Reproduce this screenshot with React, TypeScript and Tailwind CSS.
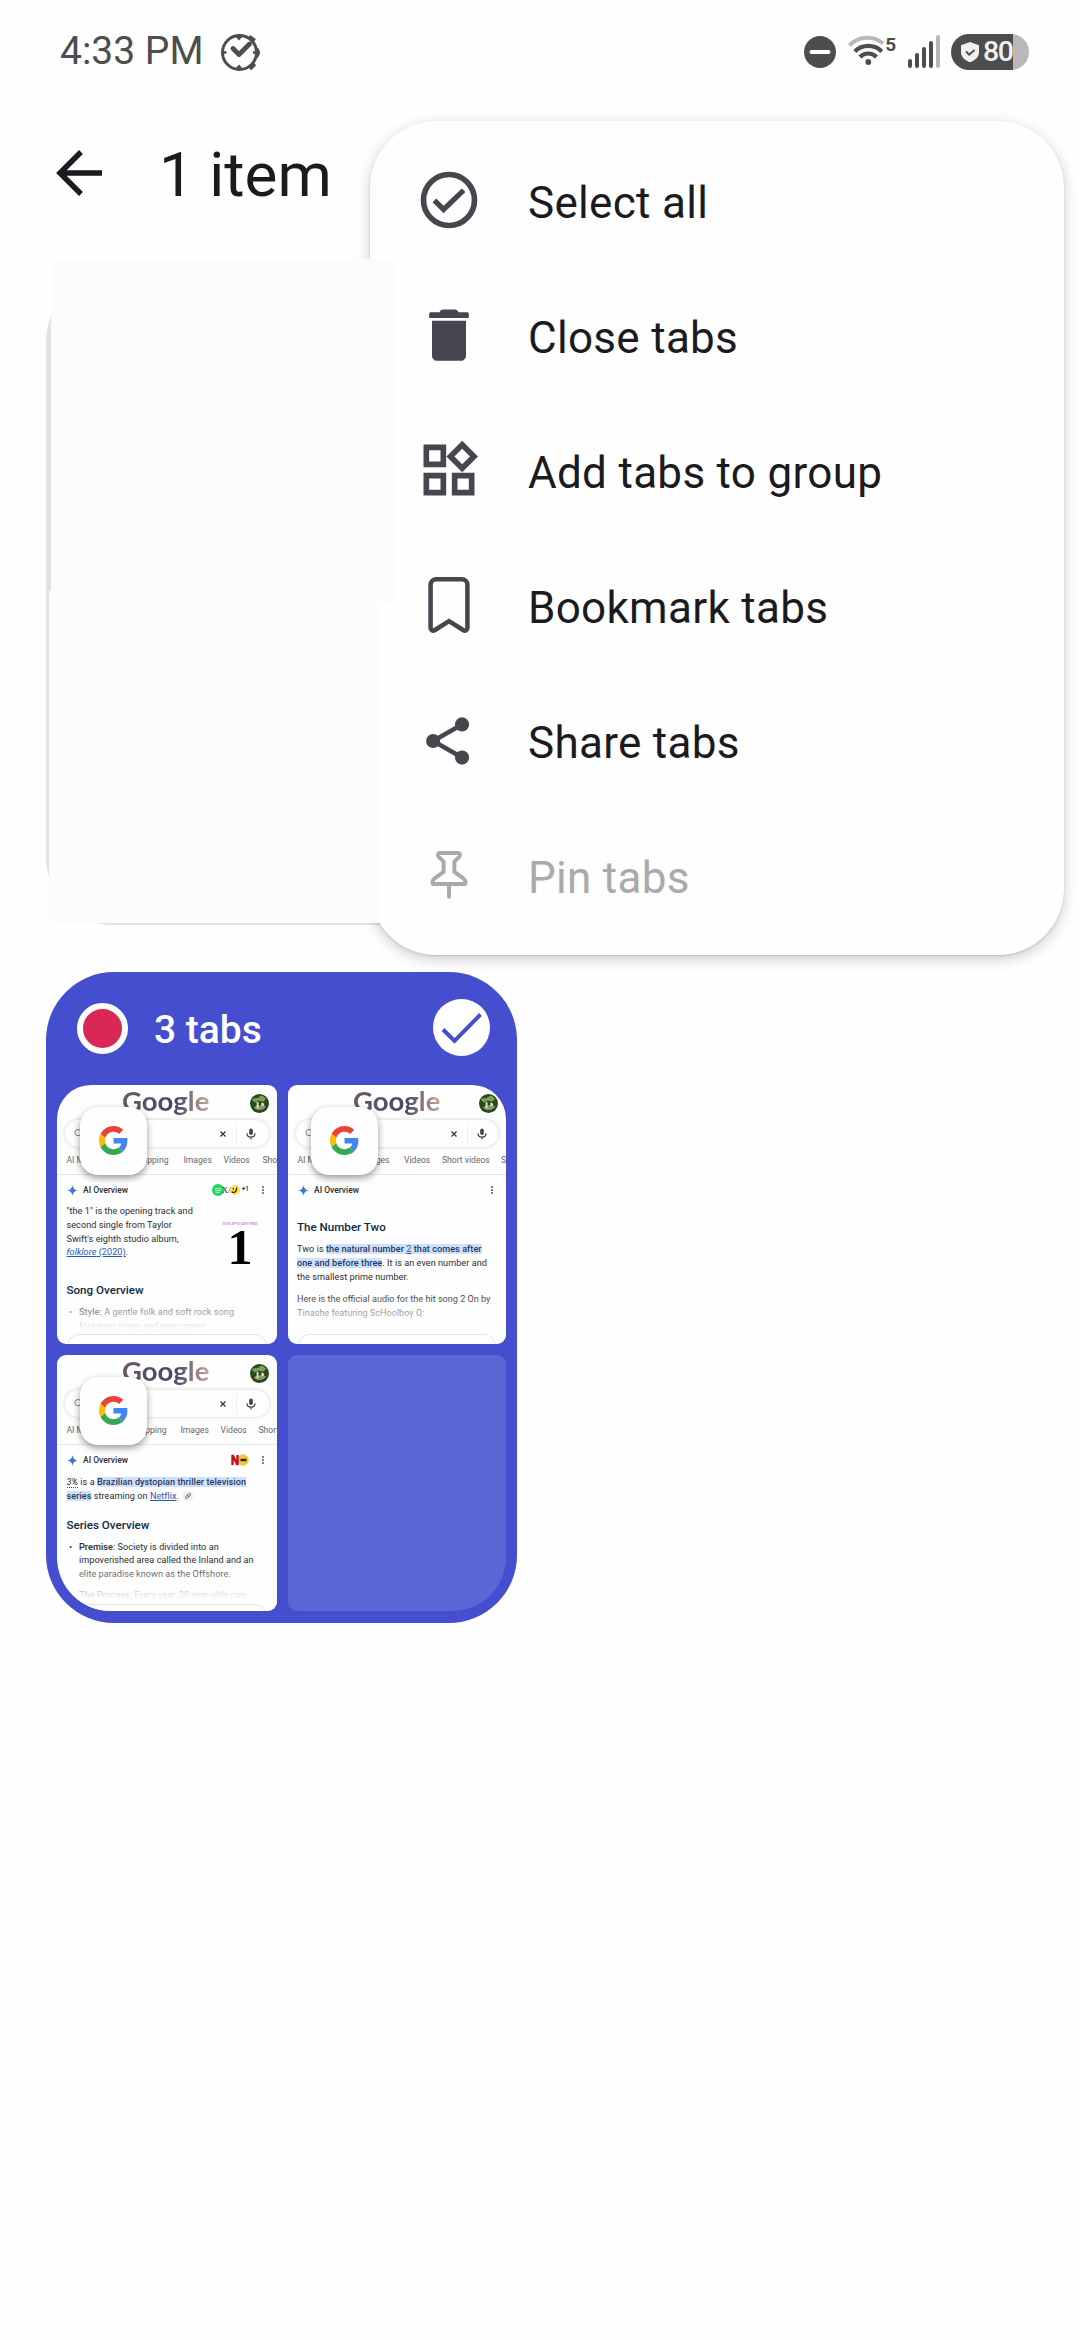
import React from "react";
import clsx from "clsx";

const ink = "#46464f";

function MenuIcon({ children, color = ink }: { children: React.ReactNode; color?: string }) {
  return (
    <svg viewBox="0 0 24 24" className="w-[68px] h-[68px] shrink-0 -mt-px" fill={color} stroke="none">
      {children}
    </svg>
  );
}

const menuItems = [
  {
    label: "Select all",
    icon: (
      <MenuIcon>
        <circle cx="12" cy="12" r="9" fill="none" stroke={ink} strokeWidth="2" />
        <path d="M10.1 16.7 17.8 9.2 16.5 7.9 10.1 14 7.5 11.5 6.2 12.800Z" />
      </MenuIcon>
    ),
  },
  {
    label: "Close tabs",
    icon: (
      <MenuIcon>
        <path d="M6 7h12v12.3c0 1-.8 1.8-1.8 1.8H7.8c-1 0-1.8-.8-1.8-1.8zM5 6V4.600c0-.4.3-.6.6-.6h3c.3-.6.7-1 1.300-1h4.200c.6 0 1 .4 1.300 1h3c.3 0 .6.2.6.6V6z" />
      </MenuIcon>
    ),
  },
  {
    label: "Add tabs to group",
    icon: (
      <MenuIcon>
        <path
          fillRule="evenodd"
          d="M3 3h8v8H3zM5 5v4h4V5zM3 13h8v8H3zM5 15v4h4v-4zM13 13h8v8h-8zM15 15v4h4v-4zM16.660 1.690 11.100 7.250l5.560 5.560 5.560-5.560zM16.660 4.500 19.400 7.250 16.660 10 13.920 7.250z"
        />
      </MenuIcon>
    ),
  },
  {
    label: "Bookmark tabs",
    icon: (
      <MenuIcon>
        <path
          fill="none"
          stroke={ink}
          strokeWidth="1.6"
          d="M5.500 4.900a2 2 0 0 1 2-2h9a2 2 0 0 1 2 2v15.200a.9.9 0 0 1-1.400.8L12 17.700l-5.100 3.200a.9.9 0 0 1-1.400-.8z"
        />
      </MenuIcon>
    ),
  },
  {
    label: "Share tabs",
    icon: (
      <MenuIcon>
        <path fill="none" stroke={ink} strokeWidth="1.6" d="M16.600 6.500 6.400 12.350l10.200 5.850" />
        <circle cx="16.600" cy="6.500" r="2.500" />
        <circle cx="6.400" cy="12.350" r="2.500" />
        <circle cx="16.600" cy="18.200" r="2.500" />
      </MenuIcon>
    ),
  },
  {
    label: "Pin tabs",
    disabled: true,
    icon: (
      <MenuIcon color="#aaaaaa">
        <path
          fill="none"
          stroke="#aaaaaa"
          strokeWidth="1.400"
          strokeLinecap="round"
          strokeLinejoin="round"
          d="M8.900 4.200h6.200c.8 0 1 .9.500 1.400L13.900 7.300v3.600l3.200 2.300c.6.500.8 1 .7 1.500 0 .3-.2.500-.5.500H6.700c-.3 0-.5-.2-.5-.5-.1-.5.1-1 .7-1.500l3.200-2.300V7.300L8.400 5.600c-.5-.5-.3-1.400.5-1.400zM12 15.300v4.400"
        />
      </MenuIcon>
    ),
  },
];

function StatusBar() {
  return (
    <div className="h-[103px] flex items-center justify-between pl-[60px] pr-[51px] text-[#4d4d4d]">
      <div className="flex items-center gap-[16px]">
        <span className="text-[39px] leading-none mt-[-1px]">4:33 PM</span>
        <svg viewBox="0 0 40 40" className="w-10 h-10" fill="none" stroke="currentColor">
          <circle cx="19.500" cy="20.500" r="17" strokeWidth="3" />
          <path d="M29 4.500l6 4M36.500 16.500l2 4-2 4.500M35 32l-5 5" strokeWidth="3.500" strokeLinejoin="round" />
          <path d="M13 16.500 19 22.500 29.500 12" strokeWidth="4.800" strokeLinecap="round" strokeLinejoin="round" />
          <path d="M14.500 3.500h9l-4.500 5zM14.500 37.500h9l-4.500-5z" fill="currentColor" stroke="none" />
          <path d="M3 20.500h3.500M33 20.500h4" strokeWidth="2.500" />
        </svg>
      </div>
      <div className="flex items-center">
        <svg viewBox="0 0 32 32" className="w-8 h-8 mr-3" fill="currentColor">
          <circle cx="16" cy="16" r="16" />
          <rect x="5.500" y="14" width="21" height="4" rx="2" fill="#fefefe" />
        </svg>
        <svg viewBox="0 0 48 36" className="w-12 h-9 mr-3" fill="none" strokeLinecap="butt">
          <path d="M1.500 11.500a24.500 24.500 0 0 1 33.500-2" stroke="#b8b8b8" strokeWidth="4" />
          <path d="M6.800 17.500a19 19 0 0 1 27 0M12 23a11.500 11.500 0 0 1 16.500 0" stroke="#4d4d4d" strokeWidth="4.200" />
          <circle cx="20.300" cy="28" r="2.900" fill="#4d4d4d" />
          <text x="37.200" y="16.500" fill="#4d4d4d" fontSize="19" fontWeight="700" fontFamily="Roboto, sans-serif">
            5
          </text>
        </svg>
        <div className="flex items-end gap-[3px] h-[33px] mr-[11px]">
          <div className="w-1 h-[9px] rounded-full bg-[#4d4d4d]" />
          <div className="w-1 h-[15px] rounded-full bg-[#4d4d4d]" />
          <div className="w-1 h-[21px] rounded-full bg-[#4d4d4d]" />
          <div className="w-1 h-[27px] rounded-full bg-[#4d4d4d]" />
          <div className="w-1 h-[33px] rounded-full bg-[#b8b8b8]" />
        </div>
        <div className="w-[78px] h-9 rounded-full overflow-hidden flex items-center pl-[10px] gap-[4px] bg-linear-to-r from-[#4d4d4d] from-80% to-[#b8b8b8] to-80%">
          <svg viewBox="0 0 18 20" className="w-[18px] h-5 shrink-0">
            <path d="M9 0 18 3.300v7C18 15 14 18.500 9 20.500 4 18.500 0 15 0 10.300v-7z" fill="#f0f0f0" />
            <path d="M5 9.500l3.200 3.200L13.500 8" fill="none" stroke="#4d4d4d" strokeWidth="1.800" />
          </svg>
          <span className="text-[28.500px] leading-none font-medium tracking-[-1.500px] text-[#f0f0f0] mt-px">80</span>
        </div>
      </div>
    </div>
  );
}

function GoogleG() {
  return (
    <svg viewBox="0 0 48 48" className="w-[29px] h-[29px] -mt-px -ml-px">
      <path fill="#EA4335" d="M24 9.500c3.540 0 6.710 1.220 9.210 3.600l6.850-6.850C35.900 2.380 30.470 0 24 0 14.620 0 6.510 5.380 2.560 13.220l7.980 6.190C12.430 13.720 17.740 9.500 24 9.500z" />
      <path fill="#4285F4" d="M46.980 24.550c0-1.570-.15-3.090-.38-4.550H24v9.020h12.940c-.58 2.960-2.260 5.480-4.780 7.180l7.730 6c4.510-4.180 7.090-10.360 7.090-17.650z" />
      <path fill="#FBBC05" d="M10.530 28.590c-.48-1.450-.76-2.990-.76-4.590s.27-3.140.76-4.590l-7.980-6.190C.92 16.460 0 20.120 0 24c0 3.880.92 7.540 2.560 10.780l7.970-6.190z" />
      <path fill="#34A853" d="M24 48c6.480 0 11.930-2.130 15.890-5.810l-7.730-6c-2.150 1.450-4.920 2.300-8.160 2.300-6.260 0-11.570-4.220-13.470-9.910l-7.980 6.190C6.510 42.620 14.620 48 24 48z" />
    </svg>
  );
}

function Dots() {
  return (
    <svg viewBox="0 0 2 8" className="w-[2px] h-2" fill="#444">
      <circle cx="1" cy="1" r=".9" />
      <circle cx="1" cy="4" r=".9" />
      <circle cx="1" cy="7" r=".9" />
    </svg>
  );
}

interface ThumbProps {
  className?: string;
  nav: React.ReactNode;
  sources?: React.ReactNode;
  children: React.ReactNode;
}

function Thumb({ className, nav, sources, children }: ThumbProps) {
  return (
    <div className={clsx("relative overflow-hidden bg-[#fefefe] whitespace-nowrap text-[#2b2d31]", className)}>
      <div className="h-[35px] pl-[65px] pr-[8px] flex justify-between">
        <span className="font-[Lato] text-[27.500px] leading-[32px] font-bold bg-linear-to-r from-[#6b5a63] via-[#474763] via-60% to-[#c9a596] bg-clip-text text-transparent">
          Google
        </span>
        <svg viewBox="0 0 20 20" className="w-[19px] h-[19px] mt-[9px]">
          <circle cx="10" cy="10" r="10" fill="#2c4a1f" />
          <path d="M2 6c3-3 5 0 8-3s5 1 7 2l-3 3-5-1-4 2z" fill="#7da05a" />
          <path d="M4 14c3-2 8-3 13-1-2 4-9 6-13 1z" fill="#8a9a6c" />
          <path d="M7 8l2 1v6H7zM12 9c2 0 3 1 3 3l-3 1z" fill="#dfe3cf" />
        </svg>
      </div>
      <div className="mx-[8px] h-[27px] rounded-full flex items-center shadow-[0_0_4px_rgba(0,0,0,0.18)]">
        <svg viewBox="0 0 10 10" className="w-[9px] h-[9px] ml-[9px]" fill="none" stroke="#777" strokeWidth="1">
          <circle cx="4.500" cy="4" r="3.500" />
        </svg>
        <svg viewBox="0 0 6 6" className="w-[6px] h-[6px] ml-[137px]" stroke="#333" strokeWidth="1.200">
          <path d="M.5.5l5 5M5.500.5l-5 5" />
        </svg>
        <div className="w-px h-[22px] bg-[#f0f0f0] ml-[10px]" />
        <svg viewBox="0 0 10 12" className="w-[10px] h-[12px] ml-[9px]" fill="none" stroke="#444" strokeWidth="1.200">
          <rect x="3.200" y=".5" width="3.600" height="6.500" rx="1.800" fill="#444" stroke="none" />
          <path d="M1 5.200c0 5.200 8 5.200 8 0M5 9v2.500" />
        </svg>
      </div>
      <div className="h-[28px] flex items-center pl-[9.500px] text-[8.600px] text-[#64676c] border-b border-[#e8e8ec] [&>span]:shrink-0">
        <span className="w-[60px]">AI Mode</span>
        {nav}
      </div>
      <div className="h-[30px] pl-[10px] pr-[13px] flex items-center justify-between">
        <div className="flex items-center gap-[5px]">
          <svg viewBox="0 0 12 12" className="w-[11px] h-[11px]" fill="#3b78dc">
            <path d="M6 0C6.600 3.800 8.200 5.400 12 6 8.200 6.600 6.600 8.200 6 12 5.400 8.200 3.800 6.600 0 6 3.800 5.400 5.400 3.800 6 0z" />
          </svg>
          <span className="text-[8.500px] font-medium">AI Overview</span>
        </div>
        <div className="flex items-center gap-[13px]">
          {sources}
          <Dots />
        </div>
      </div>
      {children}
      {/* collapsed answer fades out above the "show more" pill */}
      <div className="absolute inset-x-0 top-[208px] h-[41px] bg-linear-to-b from-[#fefefe]/0 to-[#fefefe] to-90%" />
      <div className="absolute inset-x-[10px] top-[249px] h-6 rounded-[12px] border border-[#dde3f0] bg-[#fefefe]" />
      <div className="absolute left-[23px] top-[22px] w-[67px] h-[68px] rounded-[18px] bg-[#fefefe] flex items-center justify-center shadow-[0_3px_7px_rgba(0,0,0,0.4)]">
        <GoogleG />
      </div>
    </div>
  );
}

function Mark({ children }: { children: React.ReactNode }) {
  return <span className="bg-[#d0e0fa] font-medium text-[#1f3a63]">{children}</span>;
}

function TabGroup() {
  return (
    <div className="w-[471px] h-[651px] rounded-[68px] bg-[#444ecf] px-[11px] pb-[11px] overflow-hidden">
      <div className="h-[113px] pl-5 pr-4 flex items-center">
        <div className="w-[51px] h-[51px] rounded-full bg-[#da2856] border-[6px] border-white" />
        <span className="ml-[26px] text-[39px] leading-none font-medium text-white mt-1">3 tabs</span>
        <svg viewBox="0 0 57 57" className="w-[57px] h-[57px] ml-auto mt-[-2px]">
          <circle cx="28.500" cy="28.500" r="28.500" fill="#fff" />
          <path d="M10 30.500 21.500 42 47.500 15.500" fill="none" stroke="#444ecf" strokeWidth="4" />
        </svg>
      </div>
      <div className="grid grid-cols-[220px_218px] grid-rows-[259px_256px] gap-[11px]">
        <Thumb
          className="rounded-[9px] rounded-tl-[34px]"
          nav={
            <>
              <span className="w-[42px] mr-[15px] text-right">Shopping</span>
              <span className="w-[40px]">Images</span>
              <span className="w-[39px]">Videos</span>
              <span>Short videos</span>
            </>
          }
          sources={
            <div className="flex items-center">
              <svg viewBox="0 0 12 12" className="w-[12px] h-[12px]">
                <circle cx="6" cy="6" r="6" fill="#25d366" />
                <path d="M3 4.500h6M3 6.500h6M3.500 8.300h4" stroke="#e6ffe6" strokeWidth=".8" />
              </svg>
              <span className="font-['Liberation_Serif'] text-[9px] leading-none -ml-[2px]">X/</span>
              <svg viewBox="0 0 12 12" className="w-[10px] h-[12px] -ml-px mr-[2px]">
                <circle cx="6" cy="6" r="6" fill="#f5e14a" />
                <path d="M2 8c3 2 6 1 6-5M4 3.500v2" stroke="#222" strokeWidth="1.500" fill="none" />
              </svg>
              <span className="text-[6.500px] font-medium">+1</span>
            </div>
          }
        >
          <div className="flex">
            <p className="w-[148px] pl-[9.500px] text-[9.100px] leading-[13.800px] tracking-[0.05px]">
              "the 1" is the opening track and
              <br />
              second single from Taylor
              <br />
              Swift's eighth studio album,
              <br />
              <span className="text-[#2458b8] underline">
                <i>folklore</i> (2020)
              </span>
              .
            </p>
            <div className="w-[70px] flex flex-col items-center pt-[16px]">
              <span className="text-[4.200px] leading-[5px] font-bold text-[#e58be0]">SVG.EPS.DXF.PNG</span>
              <span className="font-['Liberation_Serif'] font-bold text-[50px] leading-[38px] text-black mt-[2px]">1</span>
            </div>
          </div>
          <h3 className="pl-[9.500px] mt-[17px] text-[11.600px] leading-[14px] font-medium text-[#0f2a45]">Song Overview</h3>
          <p className="pl-[22px] mt-[9px] text-[9.100px] leading-[13.800px] tracking-[0.05px] relative">
            <span className="absolute left-[12px]">•</span>
            <b className="font-medium">Style:</b> A gentle folk and soft rock song
            <br />
            featuring piano and percussion.
          </p>
        </Thumb>

        <Thumb
          className="rounded-[9px] rounded-tr-[34px]"
          nav={
            <>
              <span className="w-[32px] mr-[14.500px] text-right">Images</span>
              <span className="w-[38px]">Videos</span>
              <span className="w-[59px]">Short videos</span>
              <span>Shopping</span>
            </>
          }
        >
          <h3 className="pl-[9px] mt-[15px] text-[11.600px] leading-[14px] font-medium text-[#0f2a45]">The Number Two</h3>
          <p className="pl-[9px] mt-[9px] text-[9.100px] leading-[13.800px] tracking-[0.05px]">
            Two is{" "}
            <Mark>
              the natural number <u className="font-normal text-[#2458b8]">2</u> that comes after
            </Mark>
            <br />
            <Mark>one and before three</Mark>. It is an even number and
            <br />
            the smallest prime number.
          </p>
          <p className="pl-[9px] mt-[9px] text-[9.100px] leading-[13.800px]">
            Here is the official audio for the hit song 2 On by
            <br />
            Tinashe featuring ScHoolboy Q:
          </p>
          <div className="ml-[9px] mt-[7px] w-[67px] h-1 bg-[#eef0fa]" />
        </Thumb>

        <Thumb
          className="rounded-[9px] rounded-bl-[54px]"
          nav={
            <>
              <span className="w-[40px] mr-[14px] text-right">Shopping</span>
              <span className="w-[40px]">Images</span>
              <span className="w-[38px]">Videos</span>
              <span>Short videos</span>
            </>
          }
          sources={
            <svg viewBox="0 0 18 12" className="w-[18px] h-[12px]">
              <circle cx="12" cy="6" r="5.800" fill="#f2c83c" />
              <path d="M9.500 4.800h6v2.500h-6z" fill="#3c2a10" />
              <path d="M1.500 11V1l5 10V1" stroke="#c1121c" strokeWidth="2.400" fill="none" />
            </svg>
          }
        >
          <p className="pl-[9.500px] mt-px text-[9.100px] leading-[13.800px] tracking-[0.05px]">
            <i className="border-b border-dotted border-[#555]">3%</i> is a <Mark>Brazilian dystopian thriller television</Mark>
            <br />
            <Mark>series</Mark> streaming on <u className="text-[#2458b8]">Netflix</u>.{" "}
            <span className="inline-flex w-[10px] h-[10px] rounded-full bg-[#e8eaf0] items-center justify-center align-middle ml-[2px]">
              <svg viewBox="0 0 10 10" className="w-[6px] h-[6px]" fill="none" stroke="#555" strokeWidth="1.300">
                <rect x="0" y="5" width="6" height="3.500" rx="1.700" transform="rotate(-45 3 6.500)" />
                <rect x="4" y="1.500" width="6" height="3.500" rx="1.700" transform="rotate(-45 7 3.500)" />
              </svg>
            </span>
          </p>
          <h3 className="pl-[9.500px] mt-[14px] text-[11.600px] leading-[14px] font-medium text-[#0f2a45]">Series Overview</h3>
          <p className="pl-[22px] mt-[9px] text-[9.100px] leading-[13.800px] tracking-[0.05px] relative">
            <span className="absolute left-[12px]">•</span>
            <b className="font-medium">Premise</b>: Society is divided into an
            <br />
            impoverished area called the Inland and an
            <br />
            elite paradise known as the Offshore.
          </p>
          <p className="pl-[22px] mt-[7px] text-[9.100px] leading-[13.800px]">
            <b className="font-medium">The Process</b>: Every year, 20-year-olds can
          </p>
        </Thumb>

        <div className="rounded-[9px] rounded-br-[54px] bg-[#5c67d5]" />
      </div>
    </div>
  );
}

function OverflowMenu() {
  return (
    <div className="absolute left-[370px] top-[121px] w-[694px] rounded-[66px] py-3 bg-[#fefefe] shadow-[0_4px_14px_rgba(0,0,0,0.2),0_1px_2px_rgba(0,0,0,0.12)]">
      {menuItems.map((item) => (
        <div key={item.label} className="h-[135px] pl-[45px] flex items-center gap-[45px]">
          {item.icon}
          <span
            className={clsx(
              "text-[44px] leading-none mt-1 tracking-[0.3px]",
              item.disabled ? "text-[#aaaaaa]" : "text-[#1b1b1f]"
            )}
          >
            {item.label}
          </span>
        </div>
      ))}
    </div>
  );
}

export default function App() {
  return (
    <div className="relative w-[1080px] h-[2340px] overflow-hidden bg-[#fefefe] font-[Roboto,sans-serif]">
      <StatusBar />
      <header className="h-[139px] flex items-center pl-[56px] gap-[57px] text-[#1b1b1f]">
        <svg viewBox="0 0 46 46" className="w-[46px] h-[46px] mt-[1px]" fill="none" stroke="currentColor" strokeWidth="5.500">
          <path d="M46 23H5M25 2 4 23l21 21" />
        </svg>
        <h1 className="text-[62px] leading-none mt-[5px]">1 item</h1>
      </header>

      <main className="pl-[46px] pt-8 flex flex-col gap-[47px]">
        <div className="w-[471px] h-[651px] rounded-[68px] bg-[#e2e2e4]" />
        <TabGroup />
      </main>

      <OverflowMenu />

      {/* hidden tab content */}
      <div className="absolute left-[51px] top-[259px] w-[345px] h-[345px] bg-[#fcfcfc]" />
      <div className="absolute left-[49px] top-[591px] w-[331px] h-[332px] bg-[#fcfcfc]" />
    </div>
  );
}
